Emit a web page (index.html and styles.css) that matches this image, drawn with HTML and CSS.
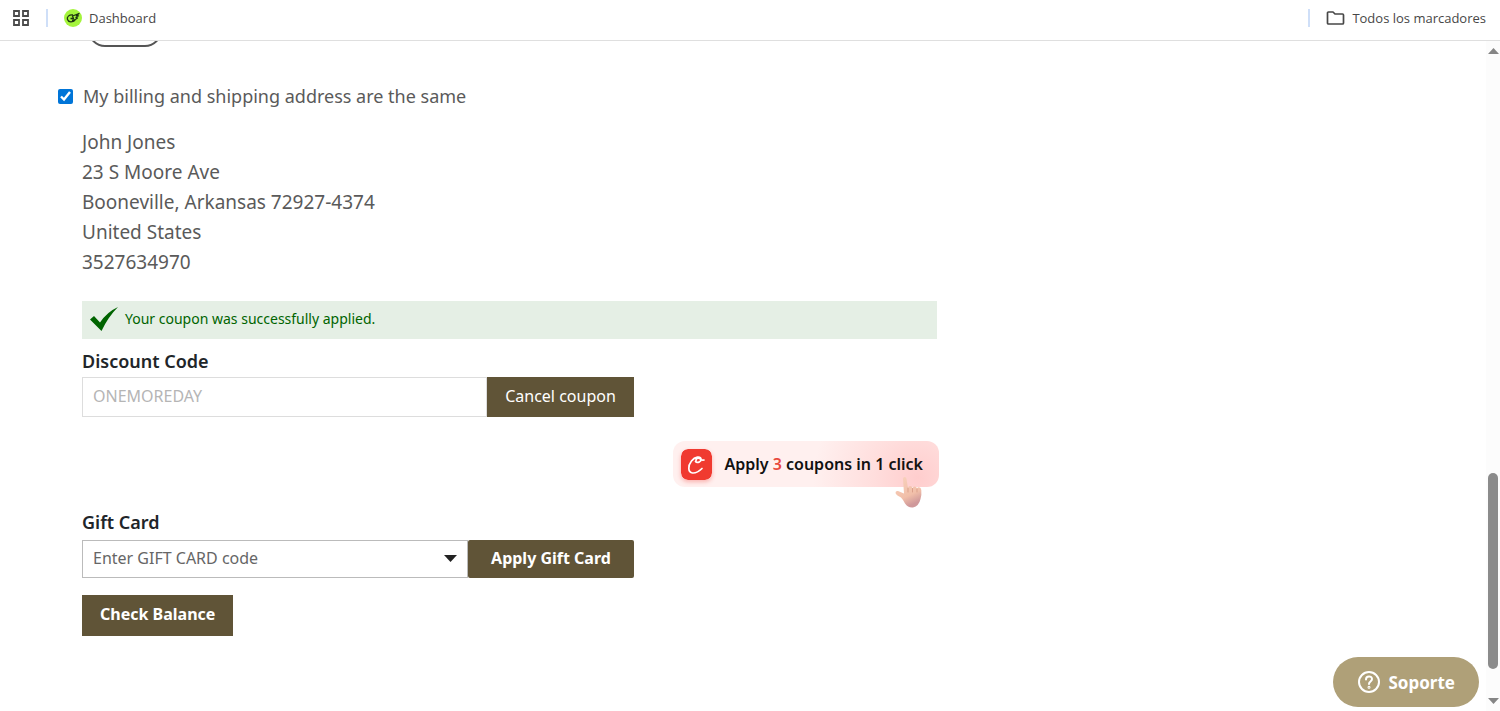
FILE: index.html
```html
<!DOCTYPE html>
<html lang="en">
<head>
	<meta charset="utf-8">
	<meta name="viewport" content="width=device-width, initial-scale=1">
	<title>Checkout</title>
	<link rel="stylesheet" href="styles.css">
</head>
<body>
	<nav class="bookmarks">
		<button type="button" class="apps" aria-label="Apps">
			<svg width="18" height="18" viewBox="0 0 18 18" fill="none" stroke="#4a4a4a" stroke-width="1.8">
				<path d="M2 2h5v5H2zM11 2h5v5h-5zM2 11h5v5H2zM11 11h5v5h-5z"/>
			</svg>
		</button>
		<span class="divider"></span>
		<a class="bookmark" href="#">
			<svg width="18" height="18" viewBox="0 0 18 18">
				<circle cx="9" cy="9" r="9" fill="#a4f43c"/>
				<path d="M9 6C5 5.500 2.500 8 3.500 10.500c1 3 5 3 8 .5M6.500 9.500h3L8.500 7 15 4.500l-2.500 2 2 .3-2.500 1.500 1.500.7-3 2-2.500.5" fill="none" stroke="#1d3311" stroke-width="1.3" stroke-linejoin="round"/>
			</svg>
			Dashboard
		</a>
		<span class="divider divider-right"></span>
		<a class="bookmark" href="#">
			<svg width="19" height="16" viewBox="0 0 19 16" fill="none" stroke="#474747" stroke-width="1.7" stroke-linejoin="round">
				<path d="M1.500 3Q1.500 2 2.500 2H7l2 2h7.500q1 0 1 1v8q0 1-1 1h-14q-1 0-1-1z"/>
			</svg>
			Todos los marcadores
		</a>
	</nav>

	<div class="viewport">
		<main class="checkout">
			<div class="pill"></div>

			<label class="same-address">
				<input type="checkbox" checked>
				My billing and shipping address are the same
			</label>

			<div class="details">
				<address>
					John Jones<br>
					23 S Moore Ave<br>
					Booneville, Arkansas 72927-4374<br>
					United States<br>
					3527634970
				</address>

				<div class="message" role="status">
					<svg width="30" height="26" viewBox="0 0 30 26">
						<path d="M1 13.500L5 10l6 6.500Q18 6 29 1 19 11 12.500 25z" fill="#006400"/>
					</svg>
					Your coupon was successfully applied.
				</div>

				<label class="title" for="discount">Discount Code</label>
				<div class="field">
					<input type="text" id="discount" placeholder="ONEMOREDAY" disabled>
					<button type="button" class="btn btn-cancel">Cancel coupon</button>
				</div>

				<button type="button" class="coupons">
					<svg class="coupons-logo" width="31" height="31" viewBox="0 0 31 31">
						<rect width="31" height="31" rx="7" fill="#f03a30"/>
						<path d="M14.500 12.500c1.500 2 6 .5 5.500-2.500-.5-3-6-2.500-9.500 2C6.500 17 7 23.500 11.500 24c4 .3 7-2 9.500-4.500M15 12c-.5-2.500 2-3.500 3.500-2.500 1.500 1.500 2.500 2 4.500 1.500" fill="none" stroke="#fff" stroke-width="1.700" stroke-linecap="round"/>
					</svg>
					<span>Apply <b>3</b> coupons in 1 click</span>
					<svg class="hand" width="28" height="32" viewBox="0 0 28 32">
						<defs>
							<linearGradient id="skin" x1="0" y1="0" x2="0.400" y2="1">
								<stop offset="0" stop-color="#f9d3be"/>
								<stop offset="0.700" stop-color="#f1bfa9"/>
								<stop offset="1" stop-color="#cf989a"/>
							</linearGradient>
						</defs>
						<path d="M8 3Q8 1 9.700 1T11.500 3L13 12q.5-2 2-2 2 0 2.500 2 .5-1.500 2-1.500 2 0 2.500 2 .7-1.500 2-1.200 2 .3 2.300 2.700.5 5-.8 9-1.500 7-7.500 8.500-5 .5-8-4-2-4-4-6Q1 19 .5 17 .5 14.500 3 15l6 2.500z" fill="url(#skin)"/>
						<path d="M13 12v4M17.500 12.500v3.500M22 13v3" fill="none" stroke="#dba18b" stroke-linecap="round"/>
					</svg>
				</button>

				<label class="title" for="giftcard">Gift Card</label>
				<div class="field field-gift">
					<div class="combo">
						<select id="giftcard">
							<option>Enter GIFT CARD code</option>
						</select>
						<svg class="caret" width="13" height="7" viewBox="0 0 13 7"><path d="M0 0h13L6.500 7z" fill="#222"/></svg>
					</div>
					<button type="button" class="btn btn-apply">Apply Gift Card</button>
				</div>
				<button type="button" class="btn btn-balance">Check Balance</button>
			</div>
		</main>

		<div class="scrollbar">
			<svg width="11" height="6" viewBox="0 0 11 6"><path d="M0 6L5.500 0 11 6z" fill="#858585"/></svg>
			<div class="track"><div class="thumb"></div></div>
			<svg width="11" height="6" viewBox="0 0 11 6"><path d="M0 0L5.500 6 11 0z" fill="#858585"/></svg>
		</div>
	</div>

	<button type="button" class="support">
		<svg width="24" height="24" viewBox="0 0 24 24" fill="none" stroke="#fff" stroke-width="2" stroke-linecap="round">
			<circle cx="12" cy="12" r="10"/>
			<path d="M9 9.500c0-4 6-4 6-.5 0 2.500-3 2.500-3 5"/>
			<circle cx="12" cy="17.300" r=".5"/>
		</svg>
		Soporte
	</button>
</body>
</html>
```
FILE: styles.css
```css
* {
	box-sizing: border-box;
}
body {
	margin: 0;
	height: 100vh;
	display: flex;
	flex-direction: column;
	overflow: hidden;
	background: #fff;
	color: #5a5a5a;
	font: 18px/30px "Noto Sans", sans-serif;
}
button, input, select {
	font-family: inherit;
}
button {
	border: 0;
	padding: 0;
	cursor: pointer;
}

/* bookmarks bar */
.bookmarks {
	flex: none;
	height: 41px;
	padding: 0 14px 4px 12px;
	display: flex;
	align-items: center;
	border-bottom: 1px solid #dfdfdf;
}
.apps {
	display: flex;
	background: none;
}
.divider {
	width: 2px;
	height: 18px;
	margin: 0 16px;
	background: #cfdff8;
}
.divider-right {
	margin-left: auto;
}
.bookmark {
	display: flex;
	align-items: center;
	gap: 7px;
	color: #474747;
	font-family: "Open Sans", sans-serif;
	font-size: 13px;
	line-height: 18px;
	text-decoration: none;
}

/* page */
.viewport {
	flex: 1;
	min-height: 0;
	display: flex;
}
.checkout {
	flex: 1;
	overflow: hidden;
	padding-left: 58px;
}
.pill {
	width: 74px;
	height: 34px;
	margin: -28px 0 34px 30px;
	border: 2px solid #555;
	border-radius: 17px;
}
.same-address {
	display: flex;
	align-items: center;
	gap: 10px;
}
.same-address input {
	width: 15px;
	height: 15px;
	margin: 0;
	accent-color: #0075d8;
}
.details {
	max-width: 879px;
	padding: 16px 0 0 24px;
	display: flex;
	flex-direction: column;
	align-items: flex-start;
}
address {
	font-size: 19px;
	font-style: normal;
}
.message {
	width: 100%;
	height: 38px;
	margin: 24px 0 7px;
	padding: 0 7px 2px;
	display: flex;
	align-items: center;
	gap: 6px;
	background: #e5efe5;
	color: #006400;
	font-size: 14px;
}
.title {
	color: #212529;
	font-size: 18px;
	font-weight: 600;
}
.field {
	width: 552px;
	max-width: 100%;
	height: 40px;
	margin-top: 1px;
	display: flex;
}
.field input {
	flex: 1;
	min-width: 0;
	padding: 0 10px 2px;
	border: 1px solid #ddd;
	background: #fff;
	font-size: 16px;
}
.field input::placeholder {
	color: #b5b5b5;
}
.btn {
	padding-bottom: 3px;
	background: #605437;
	color: #fff;
	font-size: 16px;
	font-weight: 700;
}
.btn-cancel {
	width: 147px;
	font-weight: 400;
}
.coupons {
	position: relative;
	align-self: flex-end;
	height: 46px;
	margin: 24px -2px 20px 0;
	padding: 0 16px 0 8px;
	display: flex;
	align-items: center;
	gap: 12px;
	border-radius: 12px;
	background: radial-gradient(circle at 92% 80%, #ffcdcd, #ffdedd 18%, #fff0ef 42%);
	color: #111;
	font-size: 16px;
	font-weight: 600;
}
.coupons-logo {
	border-radius: 7px;
	box-shadow: 0 2px 4px #f03a3055;
}
.coupons b {
	color: #e8493d;
	font-weight: 600;
}
.hand {
	position: absolute;
	right: 16px;
	bottom: -21px;
}
.field-gift {
	height: 38px;
	margin: 3px 0 17px;
}
.combo {
	flex: 1;
	position: relative;
	display: flex;
}
.combo select {
	flex: 1;
	min-width: 0;
	padding: 0 30px 3px 10px;
	appearance: none;
	border: 1px solid #bbb;
	border-radius: 0;
	background: #fff;
	color: #666;
	font-size: 16px;
}
.caret {
	position: absolute;
	right: 11px;
	top: 15px;
	pointer-events: none;
}
.btn-apply {
	width: 166px;
	border-radius: 2px;
}
.btn-balance {
	height: 41px;
	padding: 0 18px 3px;
}

/* scroll bar */
.scrollbar {
	width: 14px;
	padding: 7px 0;
	display: flex;
	flex-direction: column;
	align-items: center;
	background: #fcfcfc;
}
.track {
	flex: 1;
	padding: 2px 0 29px;
	display: flex;
	align-items: flex-end;
}
.thumb {
	width: 10px;
	height: 32%;
	border-radius: 5px;
	background: #8b8b8b;
}

.support {
	position: fixed;
	right: 21px;
	bottom: 4px;
	height: 50px;
	padding: 0 24px;
	display: flex;
	align-items: center;
	gap: 8px;
	border-radius: 25px;
	background: #afa078;
	color: #fff;
	font-size: 17px;
	font-weight: 700;
}
```
